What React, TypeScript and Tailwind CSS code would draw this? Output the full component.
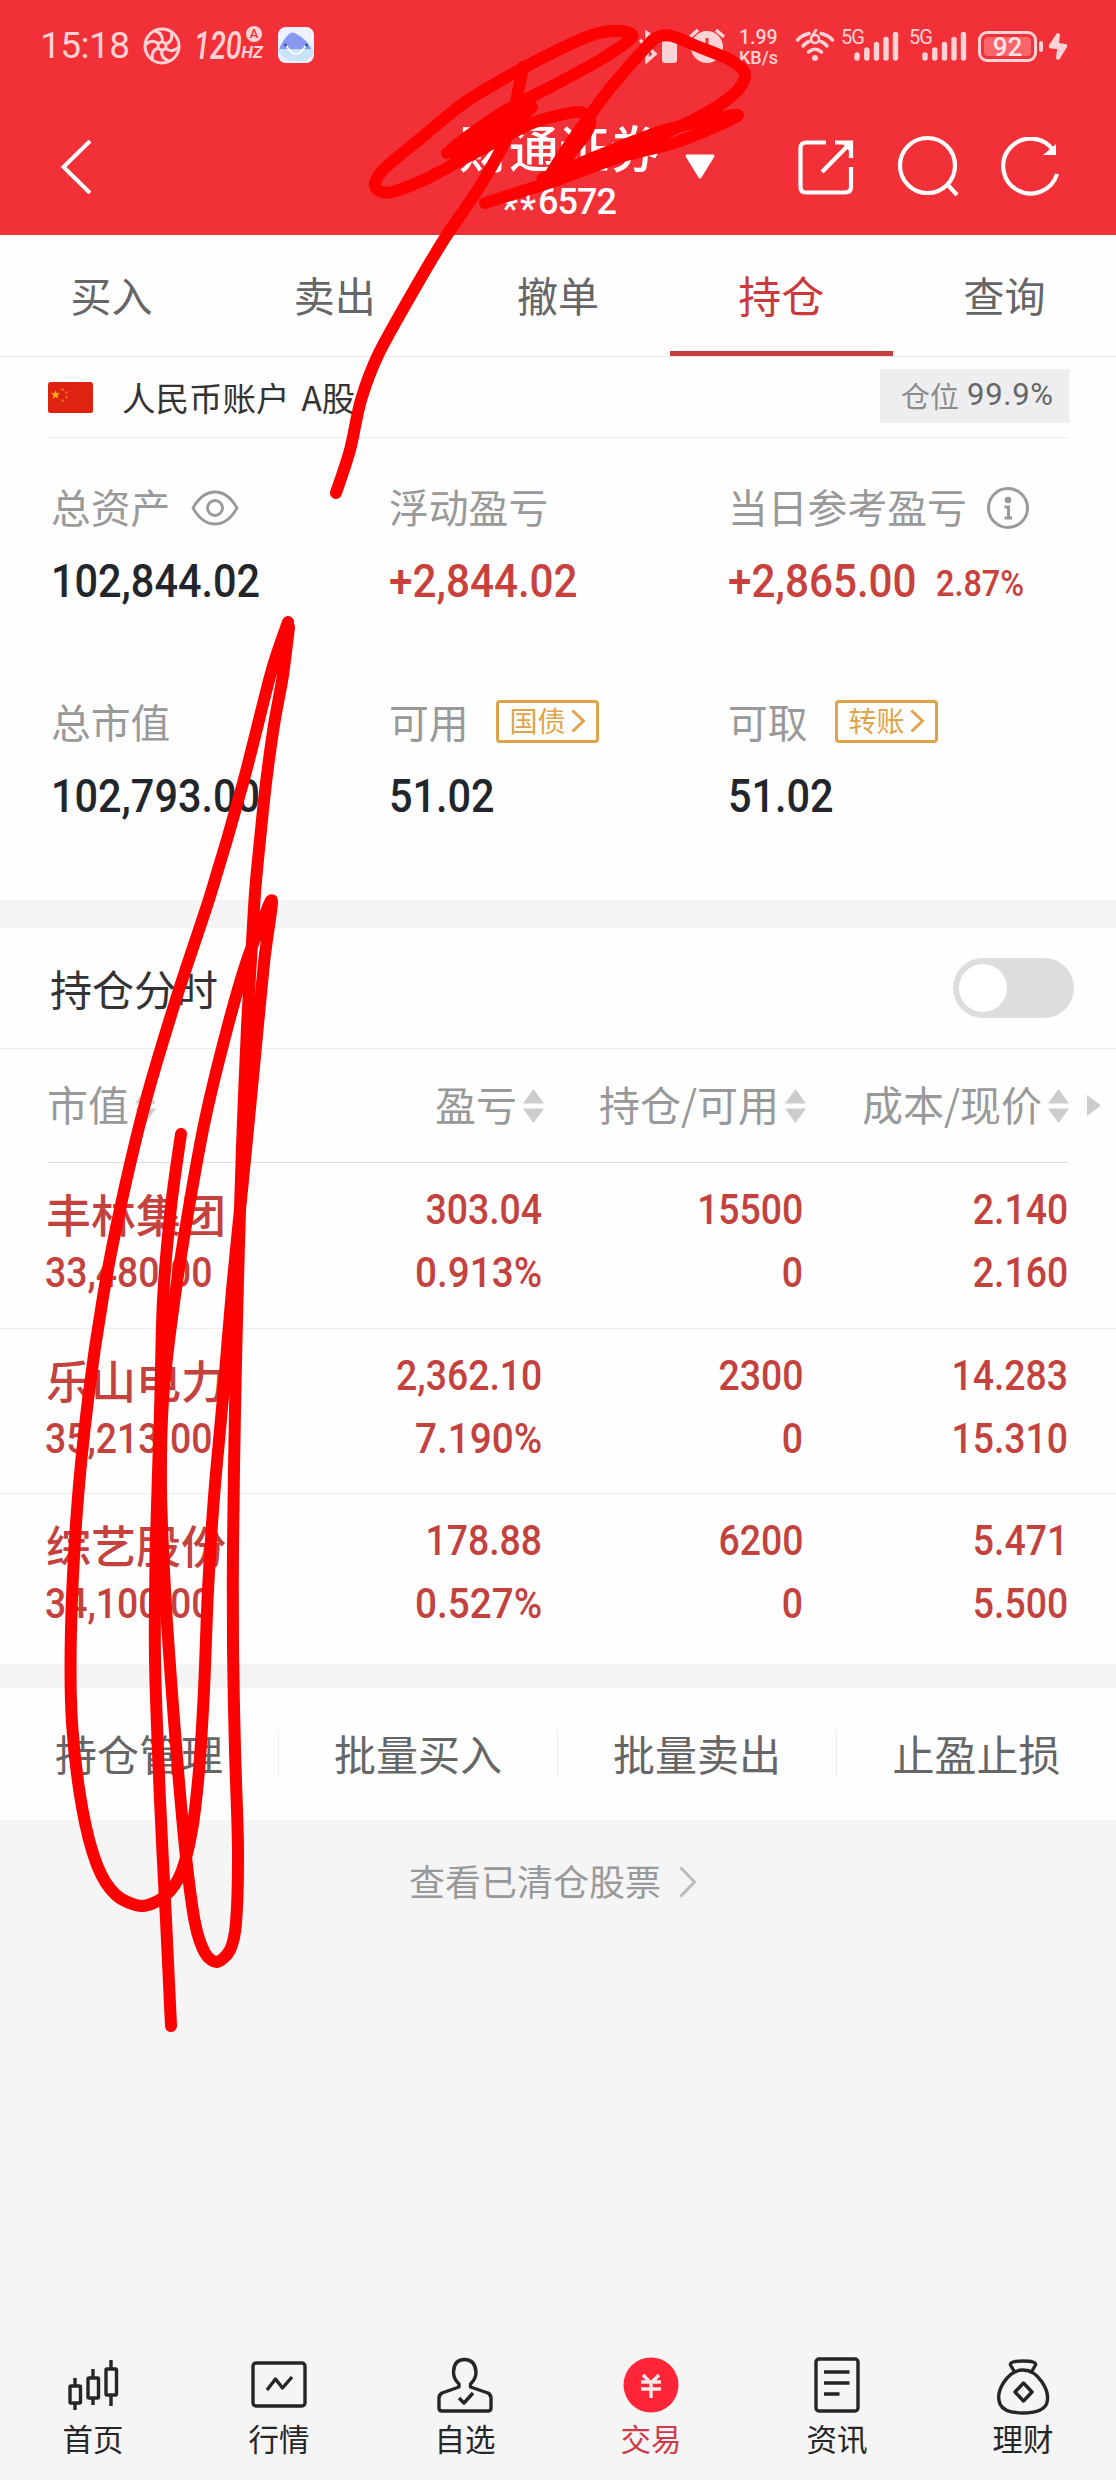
import type { ReactNode } from 'react';
import clsx from 'clsx';

type Point = [number, number];

type Holding = {
  name: string;
  value: string;
  profit: string;
  rate: string;
  amount: string;
  usable: string;
  cost: string;
  price: string;
};

const tabs = ['买入', '卖出', '撤单', '持仓', '查询'];

const holdings: Holding[] = [
  { name: '丰林集团', value: '33,480.00', profit: '303.04', rate: '0.913%', amount: '15500', usable: '0', cost: '2.140', price: '2.160' },
  { name: '乐山电力', value: '35,213.00', profit: '2,362.10', rate: '7.190%', amount: '2300', usable: '0', cost: '14.283', price: '15.310' },
  { name: '综艺股份', value: '34,100.00', profit: '178.88', rate: '0.527%', amount: '6200', usable: '0', cost: '5.471', price: '5.500' },
];

const actions = ['持仓管理', '批量买入', '批量卖出', '止盈止损'];

// Hand drawn marker strokes
const strokes: Point[][] = [
  [[523, 67], [518, 92], [510, 130], [482, 183], [445, 238], [418, 283], [379, 353], [361, 400], [350, 450], [336, 493]],
  [[447, 153], [490, 131], [532, 107], [492, 138], [449, 152], [500, 114], [556, 84], [600, 60], [632, 37], [618, 31], [592, 35], [556, 51], [514, 73], [464, 103], [420, 139], [385, 168], [375, 183], [379, 191], [392, 192], [428, 178], [480, 150], [530, 124], [560, 115], [580, 112], [590, 121], [585, 135], [560, 166], [548, 180], [562, 156], [588, 118], [612, 86], [648, 45], [658, 37], [672, 36], [699, 47], [730, 60], [745, 74], [735, 93], [699, 117], [627, 149], [556, 173], [545, 178], [600, 155], [665, 130], [738, 115], [680, 141], [620, 157], [560, 179], [520, 192], [485, 203]],
  [[288, 622], [271, 673], [243, 783], [211, 893], [178, 993], [146, 1100], [122, 1200], [103, 1297], [88, 1400], [77, 1510], [71, 1630], [72, 1723], [82, 1807], [97, 1865], [116, 1895], [142, 1906], [165, 1896], [181, 1873], [192, 1830], [199, 1770], [204, 1690], [208, 1590], [214, 1497], [223, 1397], [232, 1290], [243, 1180], [254, 1067], [264, 963], [272, 902], [264, 917], [246, 963], [226, 1033], [205, 1120], [188, 1213], [173, 1310], [163, 1400], [161, 1490], [165, 1590], [171, 1680], [178, 1770], [186, 1857], [195, 1923], [205, 1953], [217, 1962], [230, 1950], [236, 1923], [238, 1850], [235, 1750], [233, 1650], [233, 1547], [235, 1410], [238, 1280], [242, 1147], [247, 1027], [251, 960], [255, 893], [260, 840], [266, 783], [274, 725], [283, 675], [289, 627]],
  [[181, 1134], [171, 1207], [163, 1300], [160, 1413], [156, 1540], [155, 1660], [160, 1800], [166, 1920], [171, 2026]],
];

// Runs a smooth curve through every point
const toPath = (pts: Point[]) => {
  let d = `M${pts[0][0]} ${pts[0][1]}`;
  for (let i = 0; i < pts.length - 1; i++) {
    const p0 = pts[i - 1] ?? pts[i];
    const p1 = pts[i];
    const p2 = pts[i + 1];
    const p3 = pts[i + 2] ?? p2;
    d += `C${p1[0] + (p2[0] - p0[0]) / 7} ${p1[1] + (p2[1] - p0[1]) / 7} ${p2[0] - (p3[0] - p1[0]) / 7} ${p2[1] - (p3[1] - p1[1]) / 7} ${p2[0]} ${p2[1]}`;
  }
  return d;
};

const Marker = () => (
  <svg className="absolute inset-0 pointer-events-none" width="1116" height="2480" viewBox="0 0 1116 2480" fill="none" stroke="#ff0000" strokeWidth="12" strokeLinecap="round" strokeLinejoin="round">
    {strokes.map((pts, i) => <path key={i} d={toPath(pts)} />)}
  </svg>
);

const Signal = () => (
  <div className="flex w-[58px] h-8">
    <span className="font-[Roboto] text-[20px] leading-none -mt-0.5 w-[13px] tracking-tighter">5G</span>
    <svg width="45" height="32" viewBox="0 0 45 32" stroke="currentColor" strokeWidth="5.4" strokeLinecap="round">
      <path d="M3 26v3M12.800 21v8M22.500 15.500v13.500M32 10.500v18.500M41.500 5.500v23.500" />
    </svg>
  </div>
);

const StatusBar = () => (
  <div className="h-[94px] flex items-start text-[#ffd3d6] pt-[29px] pl-[40px]">
    <span className="font-[Roboto] text-[37px] leading-[34px] tracking-[-0.5px] w-[103px]">15:18</span>
    <svg width="38" height="38" viewBox="0 0 38 38" fill="none" stroke="currentColor" strokeWidth="3" className="-mt-0.5">
      <circle cx="19" cy="19" r="17" />
      <circle cx="19" cy="19" r="4" />
      {[0, 60, 120, 180, 240, 300].map((a) => (
        <path key={a} transform={`rotate(${a} 19 19)`} d="M19 15Q21 7 12 4" />
      ))}
    </svg>
    <div className="flex items-start ml-[13px] w-[71px] italic font-[Roboto] font-medium">
      <div className="w-[46px]">
        <span className="text-[38px] leading-[34px] inline-block origin-left scale-x-[0.76] w-[48px]">120</span>
      </div>
      <div className="flex flex-col items-center -mt-[3px] w-[24px]">
        <span className="w-4 h-4 rounded-full bg-[#ffd3d6] text-[#f23037] text-[13px] leading-4 text-center not-italic ml-[4px]">A</span>
        <span className="text-[17px] leading-[20px] font-bold">HZ</span>
      </div>
    </div>
    <svg width="36" height="36" viewBox="0 0 36 36" className="ml-[13px] -mt-0.5">
      <rect width="36" height="36" rx="8" fill="#eef1ff" />
      <path d="M0 24Q5 12 10 8Q14 3 20 8Q26 10 31 17Q36 22 36 25Q30 36 18 34Q6 34 0 24Z" fill="#c8e3fa" />
      <path d="M1 22Q6 12 10 8Q14 3 20 8Q28 12 33 22Z" fill="#8798ef" />
      <path d="M8 18Q18 36 28 18" fill="none" stroke="#fff" strokeWidth="1.600" />
      <circle cx="7.500" cy="18" r="1.500" fill="#3154bd" />
      <circle cx="28.500" cy="18" r="1.500" fill="#3154bd" />
    </svg>
    <svg width="90" height="36" viewBox="0 0 90 36" fill="none" stroke="currentColor" strokeWidth="3.500" className="ml-[322px]">
      <path d="M4 11L19 25L11 32V4L19 10L4 25" />
      <rect x="26" y="5" width="15" height="29" rx="3" fill="currentColor" stroke="none" />
      <path d="M30 3h8" />
      <circle cx="71" cy="18" r="16" fill="currentColor" stroke="none" />
      <path d="M54 8l8-7M80 1l8 7" />
      <path d="M71 9v11l6 3" stroke="#f23037" strokeWidth="3" />
    </svg>
    <div className="font-[Roboto] font-medium ml-[13px] w-[42px] -mt-[3px]">
      <div className="text-[19.500px] leading-[23px]">1.99</div>
      <div className="text-[18px] leading-[22px] -mt-[2px]">KB/s</div>
    </div>
    <svg width="40" height="34" viewBox="0 0 40 34" fill="none" stroke="currentColor" strokeWidth="3.500" strokeLinecap="round" className="ml-[14px]">
      <path d="M2.500 11Q7 6 14 4.500M26 4.500Q33 6 37.500 11M8 17Q11 13.500 14 12.500M26 12.500Q29 13.500 32 17M13.500 23Q20 17.500 26.500 23" />
      <path d="M21 1L16.500 8" strokeWidth="2.500" />
      <circle cx="20" cy="10" r="4" strokeWidth="2.500" />
      <circle cx="20" cy="29" r="3" fill="currentColor" stroke="none" />
    </svg>
    <div className="flex gap-[10px] ml-[6px]">
      <Signal />
      <Signal />
    </div>
    <div className="relative ml-[11px] mt-0.5 w-[59px] h-[31px] rounded-[9px] border-[3px] border-current p-[3px]">
      <div className="w-full h-full rounded-sm bg-[#f9656b] flex items-center justify-center font-[Roboto] font-medium text-[26px] leading-none text-[#ffe4e5]">92</div>
      <div className="absolute -right-[9px] top-[7px] w-1 h-[11px] rounded bg-current" />
    </div>
    <svg width="20" height="30" viewBox="0 0 20 30" fill="currentColor" className="ml-[11px] mt-[3px]">
      <path d="M9 1L1 13Q0 16 3 16.500L9 17L8 27L11 28L19 15Q20 12 17 12L11 11L12 2Z" />
    </svg>
  </div>
);

const Header = () => (
  <header className="h-[235px] bg-[#f23037] text-white">
    <StatusBar />
    <div className="h-[141px] flex items-start">
      <svg width="32" height="54" viewBox="0 0 32 54" fill="none" stroke="currentColor" strokeWidth="4" className="ml-[60px] mt-[46px]">
        <path d="M30 1L3.500 27L30 53" />
      </svg>
      <div className="ml-[366px] w-[202px] mt-[24px] flex flex-col items-center">
        <h1 className="text-[50px] leading-[56px] font-medium whitespace-nowrap">财通证券</h1>
        <span className="font-[Roboto] font-medium text-[36px] leading-[44px] h-[44px] mt-[6px] flex">
          <span className="mt-[7px] text-[36px] tracking-[2px]">**</span>
          <span className="tracking-[-1px]">6572</span>
        </span>
      </div>
      <svg width="32" height="28" viewBox="0 0 32 28" fill="currentColor" stroke="currentColor" strokeWidth="3" strokeLinejoin="round" className="ml-[24px] mt-[59px]">
        <path d="M3 3H29L16 24Z" />
      </svg>
      <svg width="56" height="56" viewBox="0 0 56 56" fill="none" stroke="currentColor" strokeWidth="4.200" className="ml-[82px] mt-[45px]">
        <path d="M28 3.500H8Q2.500 3.500 2.500 9V48Q2.500 53.500 8 53.500H47Q53 53.500 53 48V28M37 3.500H53V19M53 3.500L24 33" />
        <path d="M42 2H54V15Z" fill="currentColor" stroke="none" />
      </svg>
      <svg width="62" height="62" viewBox="0 0 62 62" fill="none" stroke="currentColor" strokeWidth="4.200" className="ml-[43px] mt-[41px]">
        <circle cx="30.500" cy="30.500" r="27.500" />
        <path d="M50 49L60 60" />
      </svg>
      <svg width="60" height="60" viewBox="0 0 60 60" fill="none" stroke="currentColor" strokeWidth="4.200" className="ml-[42px] mt-[43px]">
        <path d="M56 37A27.500 27.500 0 1 1 52 13" />
        <path d="M55 7V18H42Z" fill="currentColor" stroke="none" />
      </svg>
    </div>
  </header>
);

const TabBar = () => (
  <nav className="h-[122px] grid grid-cols-5 border-b border-[#e9e9e9] text-[41px] text-[#666]">
    {tabs.map((tab) => (
      <div
        key={tab}
        className={clsx(
          'flex items-center justify-center pt-[3px] border-b-[5px]',
          tab === '持仓' ? 'text-[#cb3a3a] border-[#c63e3e] text-[43px]' : 'border-transparent',
        )}
      >
        {tab}
      </div>
    ))}
  </nav>
);

const Flag = () => (
  <svg width="45" height="31" viewBox="0 0 45 31">
    <rect width="45" height="31" rx="2.500" fill="#de2410" />
    <path d="M7.500 8l1.200 3.300h3.300l-2.600 2.100l1 3.400l-2.900-2l-2.900 2l1-3.400l-2.600-2.100h3.300z" fill="#fbb016" />
    <g fill="#e9711b">
      <circle cx="14.500" cy="7.500" r="1.200" />
      <circle cx="18.500" cy="10.500" r="1.200" />
      <circle cx="18.500" cy="15" r="1.200" />
      <circle cx="14.500" cy="18.500" r="1.200" />
    </g>
  </svg>
);

const AccountRow = () => (
  <div className="h-[81px] mx-[48px] border-b border-[#ececec] flex items-center justify-between">
    <div className="flex items-center">
      <Flag />
      <span className="ml-[29px] text-[33.500px] text-[#333]">人民币账户<span className="ml-[12px]">A股</span></span>
    </div>
    <div className="w-[189px] h-[54px] -mr-px -mt-[3px] bg-[#eeeef0] flex items-center pl-[21px] whitespace-nowrap">
      <span className="text-[29px] text-[#8c8c8c]">仓位</span>
      <span className="font-[Roboto] text-[31px] text-[#666] ml-[8px] tracking-[0.7px]">99.9%</span>
    </div>
  </div>
);

const EyeIcon = () => (
  <svg width="48" height="36" viewBox="0 0 48 36" fill="none" stroke="#999" strokeWidth="2.800" strokeLinejoin="round">
    <path d="M2 18Q11 2 24 2T46 18Q37 34 24 34T2 18Z" />
    <circle cx="24" cy="18" r="7.500" />
  </svg>
);

const InfoIcon = () => (
  <svg width="42" height="42" viewBox="0 0 42 42" fill="none" stroke="#999" strokeWidth="3">
    <circle cx="21" cy="21" r="19.500" />
    <circle cx="21" cy="13" r="3.300" fill="#999" stroke="none" />
    <path d="M17.500 20H21.500V31M17.500 31H25" />
  </svg>
);

const LinkBadge = ({ label }: { label: string }) => (
  <span className="w-[103px] h-[43px] ml-[27px] border-[3px] border-[#dfa449] rounded-[4px] text-[#dfa449] text-[28px] leading-none flex items-center pl-[11px] -mt-[4px]">
    <span className="-mt-[2px]">{label}</span>
    <svg width="15" height="24" viewBox="0 0 15 24" fill="none" stroke="currentColor" strokeWidth="3" className="ml-[5px] shrink-0">
      <path d="M1.500 1.500L12.500 12L1.500 22.500" />
    </svg>
  </span>
);

type AssetProps = {
  label: string;
  value: string;
  red?: boolean;
  rate?: string;
  extra?: ReactNode;
};

const Asset = ({ label, value, red, rate, extra }: AssetProps) => (
  <div>
    <div className="h-[54px] flex items-center text-[39.800px] text-[#999] whitespace-nowrap">
      <span className="-mt-[4px]">{label}</span>
      {extra}
    </div>
    <div className={clsx('h-[92px] flex items-center font-[Roboto] font-medium whitespace-nowrap', red ? 'text-[#c8413d]' : 'text-[#22262b]')}>
      <span className={clsx('text-[46px] origin-left', red ? 'scale-x-[0.918]' : 'scale-x-[0.9]')}>{value}</span>
      {rate && <span className="text-[36px] origin-left scale-x-[0.9] mt-[6px] ml-[3px]">{rate}</span>}
    </div>
  </div>
);

const Assets = () => (
  <section className="h-[462px] pt-[43px] pl-[51px] grid grid-cols-[338px_339px_1fr] auto-rows-min gap-y-[69px]">
    <Asset label="总资产" value="102,844.02" extra={<span className="ml-[21px]"><EyeIcon /></span>} />
    <Asset label="浮动盈亏" value="+2,844.02" red />
    <Asset label="当日参考盈亏" value="+2,865.00" red rate="2.87%" extra={<span className="ml-[20px]"><InfoIcon /></span>} />
    <Asset label="总市值" value="102,793.00" />
    <Asset label="可用" value="51.02" extra={<LinkBadge label="国债" />} />
    <Asset label="可取" value="51.02" extra={<LinkBadge label="转账" />} />
  </section>
);

const ColumnTitle = ({ label }: { label: string }) => (
  <div className="flex items-center justify-end whitespace-nowrap">
    <span className="-mt-[4px]">{label}</span>
    <svg width="21" height="34" viewBox="0 0 21 34" fill="#ccc" className="ml-[6px] shrink-0">
      <path d="M10.500 0L21 14.500H0ZM10.500 34L0 19.500H21Z" />
    </svg>
  </div>
);

const Cell = ({ top, bottom }: { top: string; bottom: string }) => (
  <div className="flex flex-col items-end font-[Roboto] font-medium text-[42px] leading-[63px] pt-[15px]">
    <span className="origin-right scale-x-[0.89]">{top}</span>
    <span className={clsx('origin-right', bottom.endsWith('%') ? 'scale-x-[0.92]' : 'scale-x-[0.89]')}>{bottom}</span>
  </div>
);

const Holdings = () => (
  <section>
    <div className="h-[121px] border-b border-[#ebebeb] flex items-center justify-between pl-[50px] pr-[42px]">
      <span className="text-[42px] text-[#333] -mt-[2px]">持仓分时</span>
      <div className="w-[121px] h-[60px] rounded-full bg-[#ddd] p-[6px]">
        <div className="w-[48px] h-[48px] rounded-full bg-white" />
      </div>
    </div>
    <div className="h-[113px] grid grid-cols-[107px_388px_262px_263px_32px] pl-[49px] text-[41px] text-[#999]">
      <ColumnTitle label="市值" />
      <ColumnTitle label="盈亏" />
      <ColumnTitle label="持仓/可用" />
      <ColumnTitle label="成本/现价" />
      <svg width="14" height="21" viewBox="0 0 14 21" fill="#ccc" className="self-center justify-self-end">
        <path d="M0 0L14 10.500L0 21Z" />
      </svg>
    </div>
    <div className="h-px mx-[48px] bg-[#ddd]" />
    {holdings.map((h, i) => (
      <div key={h.name} className={clsx('grid grid-cols-[230px_266px_261px_265px] pl-[46px] text-[#c4423e]', i < 2 ? 'h-[165.500px] border-b border-[#ececec]' : 'h-[170px]')}>
        <div className="pt-[20px]">
          <div className="text-[45px] leading-[62px] font-medium">{h.name}</div>
          <div className="font-[Roboto] font-medium text-[42px] leading-[56px] origin-left scale-x-[0.89] -ml-px">{h.value}</div>
        </div>
        <Cell top={h.profit} bottom={h.rate} />
        <Cell top={h.amount} bottom={h.usable} />
        <Cell top={h.cost} bottom={h.price} />
      </div>
    ))}
  </section>
);

const BottomNav = () => (
  <nav className="h-[146px] grid grid-cols-6 text-[#262626] border-t border-[#f1f1f1]">
    <NavItem label="首页">
      <path d="M12 21v9M12 46v7M30 12v9M30 40v8M48 3v9M48 37v12" />
      <rect x="7" y="29" width="10.500" height="17" rx="1" />
      <rect x="25" y="21" width="10.500" height="20" rx="1" />
      <rect x="43" y="12" width="10.500" height="26" rx="1" />
    </NavItem>
    <NavItem label="行情">
      <rect x="4" y="6" width="52" height="43" rx="3" />
      <path d="M18 33L26.500 22L33.500 31L43 20" />
    </NavItem>
    <NavItem label="自选">
      <path d="M24 30V27Q18.500 22 18.500 15Q19 2.500 29.500 2.500Q40 2.500 41 15Q41 22 35.500 27V30L53 36Q56 38 56 41V51Q56 54 53 54H7Q4 54 4 51V41Q4 38 7 36Z" />
      <path d="M24 41L29 46L38 36" />
    </NavItem>
    <NavItem label="交易" active>
      <circle cx="30" cy="28" r="27.500" fill="#ff2539" stroke="none" />
      <path d="M22 18L30 26L38 18M20 25H40M20 32H40M30 25V41" stroke="#fbe6e8" />
    </NavItem>
    <NavItem label="资讯">
      <rect x="9" y="2" width="42" height="52" rx="3" />
      <path d="M17 15H42.500M17 26H42.500M17 37H32.500" />
    </NavItem>
    <NavItem label="理财">
      <g transform="translate(1 0)">
        <path d="M20 14L16.500 8Q15.500 4 29 4T41.500 8L38 14M29 13Q40 13 48 25Q56 37 52.500 47Q48 56 29 56T6 47Q2 37 10 25Q18 13 29 13Z" />
        <path d="M29.500 26L38 35L29.500 44L21 35Z" />
      </g>
    </NavItem>
  </nav>
);

const NavItem = ({ label, active, children }: { label: string; active?: boolean; children: ReactNode }) => (
  <div className="flex flex-col items-center pt-[22px]">
    <svg width="60" height="58" viewBox="0 0 60 58" fill="none" stroke="currentColor" strokeWidth="3.400" strokeLinejoin="round">
      {children}
    </svg>
    <span className={clsx('text-[30.500px] leading-[40px] mt-[3px]', active && 'text-[#cf3a48]')}>{label}</span>
  </div>
);

const App = () => {
  return (
    <div className="relative w-[1116px] h-[2480px] overflow-hidden bg-[#f5f5f5] flex flex-col font-['Noto_Sans_CJK_SC',sans-serif]">
      <Header />
      <div className="bg-[#fefefe]">
        <TabBar />
        <AccountRow />
        <Assets />
      </div>
      <div className="h-[28px] bg-[#f4f4f4]" />
      <div className="bg-[#fefefe]">
        <Holdings />
      </div>
      <div className="h-[24px] bg-[#f4f4f4]" />
      <div className="h-[132px] bg-[#fefefe] grid grid-cols-4 items-center text-[42px] text-[#666]">
        {actions.map((a) => (
          <div key={a} className="h-[48px] flex items-center justify-center border-r border-[#ededed] last:border-0">
            <span className="-mt-[4px]">{a}</span>
          </div>
        ))}
      </div>
      <div className="flex items-center justify-center mt-[38px] h-[48px] text-[36px] text-[#999]">
        <span className="-mt-[4px]">查看已清仓股票</span>
        <svg width="18" height="32" viewBox="0 0 18 32" fill="none" stroke="#bbb" strokeWidth="3" className="ml-[18px] mr-[10px]">
          <path d="M1.500 1.500L15.500 16L1.500 30.500" />
        </svg>
      </div>
      <div className="flex-1" />
      <BottomNav />
      <Marker />
    </div>
  );
};

export default App;
